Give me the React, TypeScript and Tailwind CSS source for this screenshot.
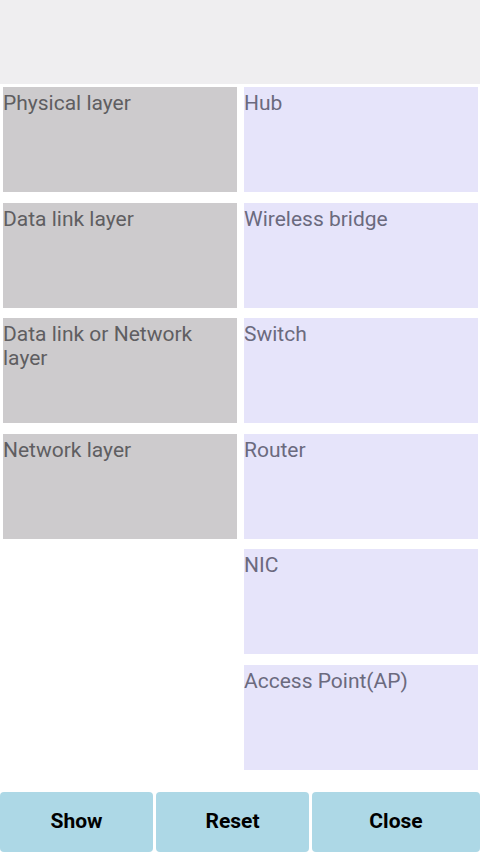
const layers = ["Physical layer", "Data link layer", "Data link or Network layer", "Network layer"]
const devices = ["Hub", "Wireless bridge", "Switch", "Router", "NIC", "Access Point(AP)"]

const App = () => {
  return (
    <div className="w-[480px] h-[854px] bg-white flex flex-col font-['Roboto',sans-serif] overflow-hidden">
      <div className="h-[84px] bg-[#efeef0]" />
      <div className="flex flex-row pt-[3px] pl-[3px] gap-[7px]">
        <div className="flex flex-col gap-[10.5px] w-[234px]">
          {layers.map(label => (
            <div
              key={label}
              className="h-[105px] bg-[#cdcbcd] text-[#5f5e61] text-[21px] leading-[24px] pt-[4px]"
            >
              {label}
            </div>
          ))}
        </div>
        <div className="flex flex-col gap-[10.5px] w-[234px]">
          {devices.map(label => (
            <div
              key={label}
              className="h-[105px] bg-[#e6e4fa] text-[#6b6a7e] text-[21px] leading-[24px] pt-[4px]"
            >
              {label}
            </div>
          ))}
        </div>
      </div>
      <div className="flex flex-row gap-[3px] mt-[22px]">
        <button className="w-[153px] h-[60px] bg-[#add8e6] rounded-[4px] text-[21px] font-bold text-black">
          Show
        </button>
        <button className="w-[153px] h-[60px] bg-[#add8e6] rounded-[4px] text-[21px] font-bold text-black">
          Reset
        </button>
        <button className="w-[168px] h-[60px] bg-[#add8e6] rounded-[4px] text-[21px] font-bold text-black">
          Close
        </button>
      </div>
    </div>
  )
}

export default App
